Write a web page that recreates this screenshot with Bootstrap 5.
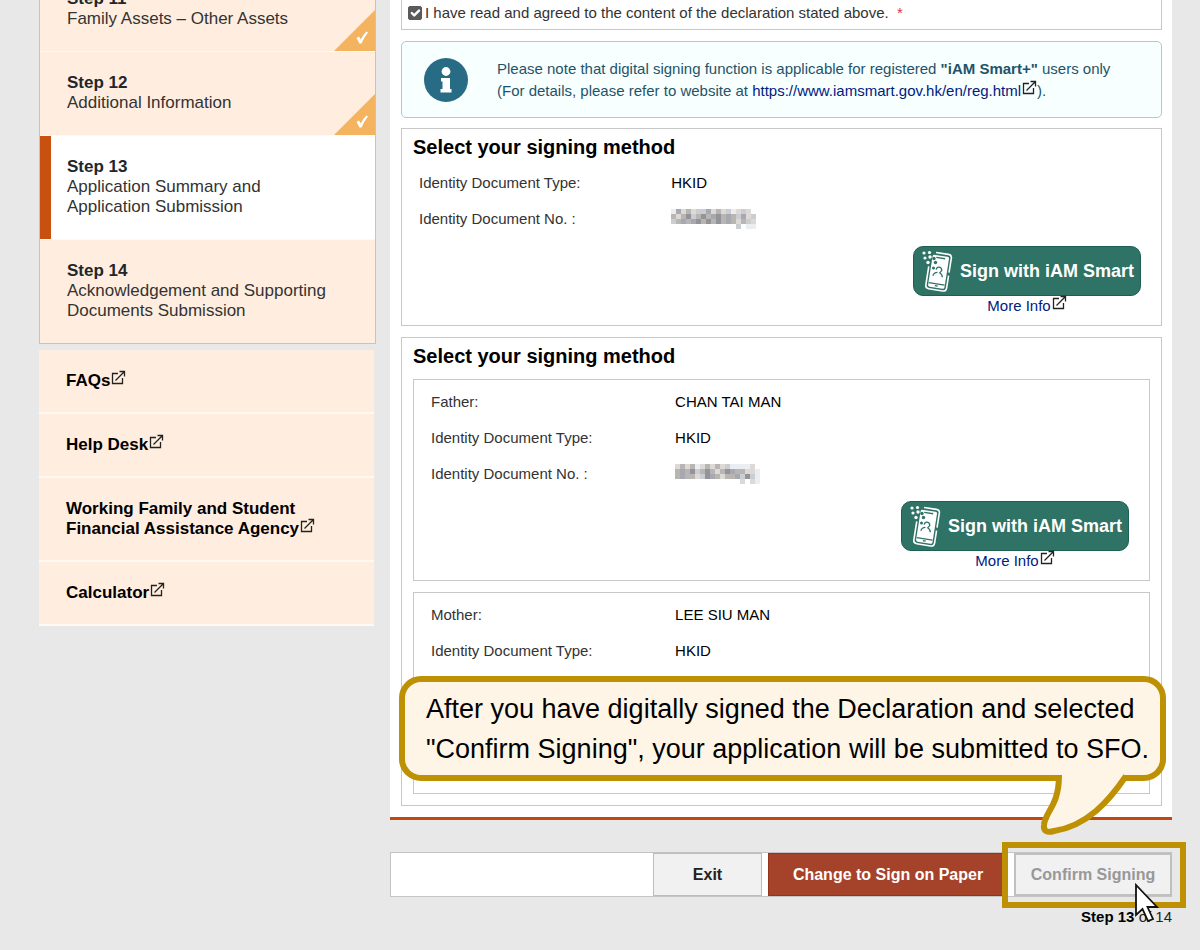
<!DOCTYPE html>
<html lang="en">
<head>
<meta charset="utf-8">
<meta name="viewport" content="width=device-width, initial-scale=1">
<title>Application Submission</title>
<link href="https://cdn.jsdelivr.net/npm/bootstrap@5.3.0/dist/css/bootstrap.min.css" rel="stylesheet">
<style>
  body { background: #e8e8e8; font-family: "Liberation Sans", Arial, sans-serif; font-size: 15px; line-height: 20px; color: #333; }
  a { text-decoration: none; color: #00207f; }
  .page { padding: 0 28px 20px 39px; gap: 14px; }
  .side { flex: 0 0 337px; font-size: 17px; }
  /* the step list is scrolled partly past the top edge */
  .steps { margin-top: -33px; border: 1px solid #c4c4c4; background: #ffeedf; }
  .step { padding: 21px 27px 22px 27px; border-bottom: 1px solid #fff9f2; color: #333; display: block; }
  .step:last-child { border-bottom: 0; }
  .step b { display: block; color: #22262a; }
  .step.current { background: #fff; box-shadow: inset 11px 0 #c8510f; }
  .tick { right: 0; bottom: 0; }
  .links { margin: 6px 2px 0 0; background: #ffeedf; }
  .links a { display: block; padding: 21px 20px 21px 27px; border-bottom: 2px solid #fff9f2; color: #000; font-weight: bold; }
  .ext { width: 15px; height: 15px; vertical-align: -1px; fill: none; stroke: #222; margin-left: 1px; position: relative; top: -2px; }
  .panel { background: #fff; padding: 0 10px 11px 11px; border-bottom: 3px solid #c4480e; }
  .frame { border: 1px solid #c8c8c8; margin-bottom: 11px; }
  .declare { border-top: 0; padding: 3px 6px 6px; gap: 3px; }
  .declare .form-check-input { width: 14px; height: 14px; margin: 0; border-radius: 2px; }
  .declare .form-check-input:checked { background-color: #5a5a5a; border-color: #5a5a5a; background-size: 16px; }
  .note { border: 1px solid #a8ccd6; border-radius: 5px; background: #f7ffff; padding: 16px 22px 15px; margin-bottom: 10px; gap: 29px; line-height: 22px; color: #1f5468; }
  .sign { padding-bottom: 9px; }
  .sign h2 { font-size: 20px; line-height: 26px; font-weight: bold; color: #000; margin: 5px 11px 5px; }
  .pair { min-height: 36px; padding-left: 17px; }
  .pair dt { flex: 0 0 34%; font-weight: normal; }
  .pair dd { margin: 0; color: #000; }
  .action { margin: 9px 20px 0; }
  .btn-sign { width: 228px; height: 50px; border-radius: 10px; padding: 0 7px; gap: 7px; background: #2f7266; border: 1px solid #1d6052; color: #fff; font-size: 18px; font-weight: bold; line-height: 20px; }
  .family { padding: 0 11px 11px; margin: 0; }
  .family h2 { margin: 5px 0 10px; }
  .person { min-height: 202px; padding: 4px 0 9px; }
  .person:last-child { margin-bottom: 0; }
  .callout { left: 9px; right: 6px; bottom: 36px; border: 6px solid #be9105; border-radius: 22px; background: #fef5e7; padding: 7px 0 6px 21px; font-size: 27px; line-height: 40px; color: #000; }
  .tail { right: 24px; bottom: -62px; }
  .bar { margin-top: 32px; background: #fff; border: 1px solid #c4c4c4; border-right: 0; gap: 6px; }
  .bar .btn { height: 43px; border-radius: 0; font-size: 16px; line-height: 20px; font-weight: bold; padding: 0 21px; color: #222; background: #f1f1f1; border: 1px solid #bcbcbc; }
  .bar .exit { width: 109px; }
  .bar .paper { width: 240px; background: #a5432a; border-color: #963319; color: #fff; }
  .bar .confirm { width: 158px; padding: 0; color: #989898; border: 2px solid #c0c0c0; opacity: 1; }
  .focus-frame { inset: -11px -14px -12px -12px; border: 6px solid #be9105; pointer-events: none; }
  .pointer { right: 12px; top: 30px; }
  .count { margin-top: 10px; color: #222; }
</style>
</head>
<body>
<svg class="d-none">
  <symbol id="ext" viewBox="0 0 15 15"><path d="M7 3.500H1.500V13.500H11.500V8M4.500 10.500L13 2M8.500 1.500H13.500V6.500" stroke-width="1.300"/></symbol>
  <symbol id="phone" viewBox="0 0 32 42">
    <g transform="rotate(9 17 22)">
      <path d="M12 3H24.500Q28 3 28 6V21M28 24V36.500Q28 40 24.500 40H10.500Q7 40 7 36.500V18" fill="none" stroke="#fff" stroke-width="1.600"/>
      <path d="M12 5.500H24Q25.800 5.500 25.800 7V36Q25.800 37.800 24 37.800H11Q9.200 37.800 9.200 36V7Q9.200 5.500 12 5.500Z" fill="#fff"/>
      <path d="M13 7.800H22M9.500 34H25.500" stroke="#2f7266" stroke-width="1.300"/>
      <path d="M16 36H19" stroke="#2f7266" stroke-width="1.300"/>
      <path d="M14.800 20Q15 17 17.500 17T20.500 20L18.800 22.500Q22 24 22 26.500M16.500 22.500Q13 23 12.500 26.500" fill="none" stroke="#2f7266" stroke-width="1.300"/>
    </g>
    <g fill="#fff"><circle cx="3" cy="3" r="1.600"/><circle cx="8.500" cy="2.500" r="1.600"/><circle cx="4" cy="8" r="1.600"/><circle cx="9" cy="7" r="1.700"/><circle cx="7" cy="12.500" r="1.700"/></g>
    <g fill="#2f7266"><circle cx="13" cy="8.500" r="1.700"/><circle cx="14.500" cy="12.500" r="1.700"/><circle cx="12.500" cy="18" r="1.500"/></g>
  </symbol>
  <symbol id="tick" viewBox="0 0 41 41"><path d="M41 0V41H0Z" fill="#f4b35f"/><path d="M22.500 28L25 26.500L26.800 29.500Q29 24.500 32.500 21.500L34 22.500Q30 27.500 27.500 33.500H25.500Z" fill="#fff"/></symbol>
</svg>

<div class="page d-flex align-items-start">
  <aside class="side">
    <nav class="steps" aria-label="Steps">
      <a href="#" class="step position-relative"><b>Step 11</b>Family Assets – Other Assets<svg class="tick position-absolute" width="41" height="41"><use href="#tick"/></svg></a>
      <a href="#" class="step position-relative"><b>Step 12</b>Additional Information<svg class="tick position-absolute" width="41" height="41"><use href="#tick"/></svg></a>
      <a href="#" class="step current" aria-current="step"><b>Step 13</b>Application Summary and<br>Application Submission</a>
      <a href="#" class="step"><b>Step 14</b>Acknowledgement and Supporting<br>Documents Submission</a>
    </nav>
    <nav class="links" aria-label="Related links">
      <a href="#">FAQs<svg class="ext"><use href="#ext"/></svg></a>
      <a href="#">Help Desk<svg class="ext"><use href="#ext"/></svg></a>
      <a href="#">Working Family and Student<br>Financial Assistance Agency<svg class="ext"><use href="#ext"/></svg></a>
      <a href="#">Calculator<svg class="ext"><use href="#ext"/></svg></a>
    </nav>
  </aside>

  <main class="flex-grow-1">
    <div class="panel position-relative">
      <div class="frame declare d-flex align-items-center">
        <input class="form-check-input" type="checkbox" id="agree" checked>
        <label for="agree">I have read and agreed to the content of the declaration stated above. &nbsp;<span class="text-danger">*</span></label>
      </div>

      <div class="note d-flex align-items-center">
        <svg width="44" height="44" viewBox="0 0 44 44" class="flex-shrink-0"><circle cx="22" cy="22" r="22" fill="#276b84"/><circle cx="22" cy="13.500" r="4.400" fill="#fff"/><path d="M17 20H26V31H27.500V34.500H16.500V31H18.500V23.500H17Z" fill="#fff"/></svg>
        <div>Please note that digital signing function is applicable for registered <b>"iAM Smart+"</b> users only<br>(For details, please refer to website at <a href="#">https://www.iamsmart.gov.hk/en/reg.html</a><svg class="ext"><use href="#ext"/></svg>).</div>
      </div>

      <section class="frame sign">
        <h2>Select your signing method</h2>
        <dl class="m-0">
          <div class="pair d-flex align-items-center"><dt>Identity Document Type:</dt><dd>HKID</dd></div>
          <div class="pair d-flex align-items-center"><dt>Identity Document No. :</dt><dd class="d-flex"><svg class="mosaic" width="85" height="20" data-seed="0"></svg></dd></div>
        </dl>
        <div class="action d-flex flex-column align-items-end">
          <div class="text-center">
            <button type="button" class="btn btn-sign d-flex align-items-center text-nowrap"><svg width="32" height="42" class="flex-shrink-0"><use href="#phone"/></svg>Sign with iAM Smart</button>
            <a href="#" class="d-block">More Info<svg class="ext"><use href="#ext"/></svg></a>
          </div>
        </div>
      </section>

      <section class="frame sign family">
        <h2>Select your signing method</h2>
        <div class="frame person">
          <dl class="m-0">
            <div class="pair d-flex align-items-center"><dt>Father:</dt><dd>CHAN TAI MAN</dd></div>
            <div class="pair d-flex align-items-center"><dt>Identity Document Type:</dt><dd>HKID</dd></div>
            <div class="pair d-flex align-items-center"><dt>Identity Document No. :</dt><dd class="d-flex"><svg class="mosaic" width="85" height="20" data-seed="1"></svg></dd></div>
          </dl>
          <div class="action d-flex flex-column align-items-end">
            <div class="text-center">
              <button type="button" class="btn btn-sign d-flex align-items-center text-nowrap"><svg width="32" height="42" class="flex-shrink-0"><use href="#phone"/></svg>Sign with iAM Smart</button>
              <a href="#" class="d-block">More Info<svg class="ext"><use href="#ext"/></svg></a>
            </div>
          </div>
        </div>
        <div class="frame person">
          <dl class="m-0">
            <div class="pair d-flex align-items-center"><dt>Mother:</dt><dd>LEE SIU MAN</dd></div>
            <div class="pair d-flex align-items-center"><dt>Identity Document Type:</dt><dd>HKID</dd></div>
          </dl>
        </div>
      </section>

      <div class="callout position-absolute" role="note">After you have digitally signed the Declaration and selected<br>"Confirm Signing", your application will be submitted to SFO.
        <svg class="tail position-absolute" width="100" height="64" viewBox="0 0 100 64"><path d="M23 0H89V4C74 28 54 50 24 57Q12 60 11 53C13 38 24 32 23 0Z" fill="#fef5e7"/><path d="M23 2C23 34 9 38 8 52Q7 61 18 58C51 53 73 28 90 3" fill="none" stroke="#be9105" stroke-width="6"/></svg>
      </div>
    </div>

    <div class="bar d-flex justify-content-end">
      <button type="button" class="btn exit">Exit</button>
      <button type="button" class="btn paper text-nowrap">Change to Sign on Paper</button>
      <div class="position-relative">
        <button type="button" class="btn confirm" disabled>Confirm Signing</button>
        <div class="focus-frame position-absolute"></div>
        <svg class="pointer position-absolute" width="26" height="40" viewBox="0 0 26 40"><path d="M2 2V32L8.500 26L14 38L19 36L13.500 24H23Z" fill="#fff" stroke="#111" stroke-width="1.800"/></svg>
      </div>
    </div>
    <div class="count text-end"><b class="text-black">Step 13</b> of 14</div>
  </main>
</div>

<script src="https://cdn.jsdelivr.net/npm/bootstrap@5.3.0/dist/js/bootstrap.bundle.min.js"></script>
<script>
  // Masked identity numbers: one tone key per 5px cell, "." is empty
  const masks = [
    ["eadbdccadbdcedcd.", "bdb9cb9ba9babcadc", "cbaba9b9b9babdbcd", ".............c.ee"],
    ["dbdbedbdbdceeeed.", "bab9cb9bdb9abbdde", "babbdc9abdbbac9ce", ".............d.de"]
  ];
  const tint = { a: "#a6aab0", b: "#b9b5b3", c: "#cbcdd3", d: "#ddd9d6", e: "#eaedf1", 9: "#929499" };
  document.querySelectorAll(".mosaic").forEach(svg => {
    svg.innerHTML = masks[svg.dataset.seed].map((row, y) => [...row].map((c, x) =>
      c === "." ? "" : `<rect x="${x * 5}" y="${y * 5}" width="5" height="5" fill="${tint[c]}"/>`).join("")).join("");
  });
</script>
</body>
</html>
